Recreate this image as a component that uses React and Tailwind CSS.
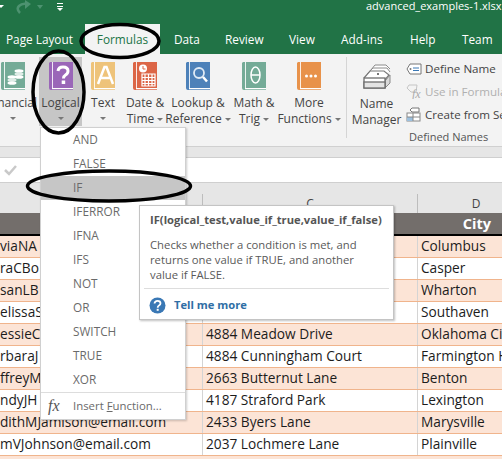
import React from 'react';

const TABS = [
  { label: 'Page Layout', width: 'w-[85px]', pad: 'pl-[6px]' },
  { label: 'Formulas', width: 'w-[75px]', active: true },
  { label: 'Data', width: 'w-[65px]', pad: 'pl-[14px]' },
  { label: 'Review', width: 'w-[64px]' },
  { label: 'View', width: 'w-[52px]' },
  { label: 'Add-ins', width: 'w-[69px]' },
  { label: 'Help', width: 'w-[52px]' },
  { label: 'Team', width: 'w-[40px]' },
];

const MENU_ITEMS = ['AND', 'FALSE', 'IF', 'IFERROR', 'IFNA', 'IFS', 'NOT', 'OR', 'SWITCH', 'TRUE', 'XOR'];

const ROWS = [
  ['viaNA', '', 'Columbus'],
  ['raCBo', '', 'Casper'],
  ['sanLB', '', 'Wharton'],
  ['elissaS', '', 'Southaven'],
  ['essieCD', '4884 Meadow Drive', 'Oklahoma City'],
  ['rbaraJ', '4884 Cunningham Court', 'Farmington Hills'],
  ['ffreyM', '2663 Butternut Lane', 'Benton'],
  ['ndyJH', '4187 Straford Park', 'Lexington'],
  ['dithMJamison@email.com', '2433 Byers Lane', 'Marysville'],
  ['mVJohnson@email.com', '2037 Lochmere Lane', 'Plainville'],
];

const Caret = () => <span className="inline-block w-0 h-0 border-x-[3px] border-x-transparent border-t-[3px] border-t-[#777]" />;

const BookIcon = ({ color, children }) => (
  <svg width="24" height="28" viewBox="0 0 24 28" className="block">
    <path d="M1 0H24V26H3V28H2Q0 28 0 26V1Z" fill={color} />
    <rect x="3" y="27" width="21" height="1" fill={color} opacity="0.7" />
    <rect x="3" y="0" width="1" height="27" fill="#fff" opacity="0.85" />
    <rect x="3" y="26" width="21" height="1" fill="#fff" />
    {children}
  </svg>
);

const RibbonButton = ({ width, label, second, caretInline, children, active, extra }) => (
  <div className={`${width} ${extra || ''} h-[69px] shrink-0 flex flex-col items-center pt-[5px] text-[#444] text-[12px] leading-[16px] ${active ? 'bg-[#c6c6c6]' : ''}`}>
    <div className="h-[29px]">{children}</div>
    <div className="mt-[5px] whitespace-nowrap">{label}</div>
    <div className="whitespace-nowrap flex items-center gap-[3px] h-[16px]">
      {second}
      {caretInline && <Caret />}
    </div>
  </div>
);

const Tooltip = () => (
  <div className="absolute left-[139px] top-[205px] w-[255px] h-[115px] bg-white border border-[#c4c4c4] shadow-[1px_1px_2px_rgba(0,0,0,0.25)] flex flex-col">
    <div className="pl-[10px] pt-[6px] text-[11.2px] leading-[16px] font-bold text-[#555] whitespace-nowrap">IF(logical_test,value_if_true,value_if_false)</div>
    <div className="pl-[10px] pt-[9px] text-[11.3px] leading-[15px] text-[#5a5a5a] whitespace-nowrap">
      <div>Checks whether a condition is met, and</div>
      <div>returns one value if TRUE, and another</div>
      <div>value if FALSE.</div>
    </div>
    <div className="mx-[4px] mt-[6px] h-px bg-[#ddd]" />
    <div className="flex items-center pl-[9px] pt-[8px] gap-[8px]">
      <svg width="17" height="17" viewBox="0 0 17 17">
        <circle cx="8.500" cy="8.500" r="8" fill="#3a78b5" />
        <path d="M5.500 6.500Q5.800 3.800 8.500 3.800Q11.500 3.800 11.500 6.300Q11.500 7.700 10 8.500Q8.700 9.200 8.700 10.800" fill="none" stroke="#fff" strokeWidth="1.800" />
        <rect x="7.700" y="11.800" width="2" height="2" fill="#fff" />
      </svg>
      <span className="text-[11.2px] font-bold text-[#2f6ea5]">Tell me more</span>
    </div>
  </div>
);

const LogicalMenu = () => (
  <div className="absolute left-[40px] top-[127px] w-[146px] h-[293px] bg-white border border-[#d0d0d0] shadow-[1px_1px_2px_rgba(0,0,0,0.2)] flex flex-col">
    {MENU_ITEMS.map((item) => (
      <div key={item} className={`h-[24px] shrink-0 pl-[32px] flex items-center text-[11.8px] text-[#6a6a6a] ${item === 'IF' ? 'bg-[#c6c6c6]' : ''}`}>{item}</div>
    ))}
    <div className="h-px bg-[#ddd]" />
    <div className="flex items-center h-[26px]">
      <span className="w-[32px] pl-[7px] text-[16px] italic text-[#555] font-['Liberation_Serif',serif]">fx</span>
      <span className="text-[11.4px] text-[#6a6a6a] whitespace-nowrap">Insert <u>F</u>unction...</span>
    </div>
  </div>
);

export default function App() {
  return (
    <div className="relative w-[502px] h-[459px] overflow-hidden bg-white flex flex-col font-['Open_Sans','Noto_Sans',sans-serif]">
      {/* title bar */}
      <div className="h-[24px] bg-[#217346] flex items-start relative shrink-0">
        <span className="mt-[5px] w-0 h-0 border-x-[3px] border-x-transparent border-t-[3px] border-t-white -ml-[2px]" />
        <svg width="18" height="14" viewBox="0 0 18 14" className="ml-[11px]">
          <path d="M5 13Q1 9 4 6Q7 3 12 4" fill="none" stroke="#4d9270" strokeWidth="2.500" />
          <path d="M10 0L16 4L10 9Z" fill="#4d9270" />
        </svg>
        <span className="mt-[5px] ml-[4px] w-0 h-0 border-x-[3px] border-x-transparent border-t-[4px] border-t-[#4d9270]" />
        <svg width="8" height="8" viewBox="0 0 8 8" className="ml-[13px] mt-[3px]">
          <path d="M1 0.500H7M1 3.500H7" stroke="#fff" />
          <path d="M1 5H7L4 8Z" fill="#fff" />
        </svg>
        <span className="absolute left-[366px] -top-[1px] text-[11px] leading-[14px] text-white whitespace-nowrap">advanced_examples-1.xlsx</span>
      </div>

      {/* tabs */}
      <div className="h-[30px] bg-[#217346] flex shrink-0 text-[11.8px] text-white">
        {TABS.map((tab) => (
          <div key={tab.label} className={`${tab.width} ${tab.pad || ''} shrink-0 flex items-center whitespace-nowrap pt-[1px] ${tab.active ? 'bg-[#f3f3f3] text-[#217346] justify-center' : ''}`}>{tab.label}</div>
        ))}
      </div>

      {/* ribbon */}
      <div className="h-[93px] bg-[#f3f3f3] border-b border-[#d0d0d0] flex shrink-0 overflow-hidden pt-[3px]">
        <RibbonButton width="w-[53px]" extra="-ml-[14px]" label="Financial" caretInline>
          <BookIcon color="#74ab97">
            <ellipse cx="18" cy="9" rx="4.500" ry="1.800" fill="#fff" />
            <ellipse cx="18" cy="12" rx="4.500" ry="1.800" fill="#dfece7" />
            <ellipse cx="18" cy="15" rx="4.500" ry="1.800" fill="#fff" />
            <ellipse cx="11" cy="15" rx="4.500" ry="1.800" fill="#fff" />
            <ellipse cx="11" cy="18" rx="4.500" ry="1.800" fill="#dfece7" />
            <ellipse cx="11" cy="21" rx="4.500" ry="1.800" fill="#fff" />
          </BookIcon>
        </RibbonButton>
        <RibbonButton width="w-[43px]" label="Logical" caretInline active>
          <BookIcon color="#9a66b8">
            <path d="M9 9Q9.500 5 14 5Q19 5 19 9Q19 11.500 16.500 13Q14.500 14.200 14.500 16.500" fill="none" stroke="#fff" strokeWidth="3" />
            <rect x="12.700" y="18.500" width="3.500" height="3.500" fill="#fff" />
          </BookIcon>
        </RibbonButton>
        <RibbonButton width="w-[42px]" label="Text" caretInline>
          <BookIcon color="#eec37a">
            <path d="M7 22L13.500 5H15.500L22 22M9.500 16H19.500" fill="none" stroke="#fff" strokeWidth="2.500" />
          </BookIcon>
        </RibbonButton>
        <RibbonButton width="w-[42px]" label="Date &" second="Time" caretInline>
          <BookIcon color="#dc6546">
            <circle cx="10" cy="6.500" r="4" fill="#fff" />
            <path d="M10 4V7H12.500" stroke="#dc6546" strokeWidth="1" fill="none" />
            <path d="M9 12H22V24H9ZM9 15.500H22M9 18.500H22M9 21.500H22M12 12V24M15.500 12V24M19 12V24" fill="none" stroke="#fff" strokeWidth="1.200" />
          </BookIcon>
        </RibbonButton>
        <RibbonButton width="w-[64px]" label="Lookup &" second="Reference" caretInline>
          <BookIcon color="#4d81b9">
            <circle cx="13" cy="11" r="5" fill="none" stroke="#dfeaf5" strokeWidth="1.800" />
            <path d="M17 15L21 19.500" stroke="#fff" strokeWidth="2.500" />
          </BookIcon>
        </RibbonButton>
        <RibbonButton width="w-[48px]" label="Math &" second="Trig" caretInline>
          <BookIcon color="#74ab97">
            <ellipse cx="13.500" cy="13" rx="4.500" ry="8" fill="none" stroke="#fff" strokeWidth="1.500" />
            <path d="M9 13H18" stroke="#fff" strokeWidth="1.500" />
          </BookIcon>
        </RibbonButton>
        <RibbonButton width="w-[62px]" label="More" second="Functions" caretInline>
          <BookIcon color="#e8924a">
            <circle cx="9.500" cy="14" r="1.500" fill="#fff" />
            <circle cx="14" cy="14" r="1.500" fill="#fff" />
            <circle cx="18.500" cy="14" r="1.500" fill="#fff" />
          </BookIcon>
        </RibbonButton>
        <div className="w-px h-[81px] bg-[#d5d5d5] ml-[6px] shrink-0" />
        <RibbonButton width="w-[59px]" label="Name" second="Manager">
          <svg width="28" height="29" viewBox="0 0 28 29" className="block">
            <path d="M7 9L12 3H23L27 7" fill="#fff" stroke="#8a8a8a" />
            <path d="M4 12L10 6H24L27 10" fill="#fff" stroke="#8a8a8a" />
            <path d="M1 16L7 9H21L26 13L21 19" fill="#fff" stroke="#777" strokeWidth="1.200" />
            <path d="M22 19L27 13V21L22 26Z" fill="#d9d9d9" stroke="#8a8a8a" />
            <rect x="1" y="16" width="21" height="10" fill="#fff" stroke="#6e6e6e" strokeWidth="1.300" />
            <rect x="1" y="20" width="21" height="6" fill="#e4e4e4" stroke="#6e6e6e" strokeWidth="1.300" />
            <rect x="14" y="11" width="2" height="2" fill="#777" />
          </svg>
        </RibbonButton>
        <div className="flex flex-col text-[11.6px] leading-[23px] text-[#444] whitespace-nowrap">
          <div className="flex items-center gap-[3px]">
            <svg width="16" height="12" viewBox="0 0 16 12">
              <path d="M4 1H15V11H4L1 6Z" fill="#fff" stroke="#777" />
              <path d="M7 5H13M7 7.500H13" stroke="#3a78b5" />
              <circle cx="4.500" cy="6" r="1" fill="#777" />
            </svg>
            Define Name
          </div>
          <div className="flex items-center gap-[3px] text-[#b0b0b0]">
            <svg width="16" height="15" viewBox="0 0 16 15">
              <path d="M3 1H11L10 8H5L1 4Z" fill="none" stroke="#c5c5c5" />
              <text x="6" y="14" fontSize="12" fontStyle="italic" fill="#aaa" fontFamily="Liberation Serif, serif">fx</text>
            </svg>
            Use in Formula
          </div>
          <div className="flex items-center gap-[3px]">
            <svg width="16" height="15" viewBox="0 0 16 15">
              <rect x="1" y="6" width="13" height="8" fill="#fff" stroke="#888" />
              <rect x="1" y="10" width="6" height="4" fill="#9cc0de" />
              <path d="M1 10H14M7 6V14" stroke="#888" />
              <path d="M6 1H13V5H6L4 3Z" fill="#fff" stroke="#777" />
            </svg>
            Create from Selection
          </div>
          <div className="text-[11px] leading-[15px] pl-[3px] text-[#555] mt-[3px]">Defined Names</div>
        </div>
      </div>

      {/* strip under the ribbon */}
      <div className="h-[11px] bg-[#e6e6e6] border-b border-[#cfcfcf] shrink-0" />

      {/* formula bar */}
      <div className="h-[25px] bg-white border-b border-[#cfcfcf] shrink-0 flex items-center pl-[4px]">
        <svg width="13" height="12" viewBox="0 0 13 12">
          <path d="M1 6L5 10L12 2" fill="none" stroke="#c9c9c9" strokeWidth="2.500" />
        </svg>
      </div>

      {/* column headers */}
      <div className="h-[30px] bg-[#e6e6e6] flex items-end shrink-0 text-[12px] text-[#444] leading-[19px]">
        <div className="w-[203px] shrink-0 h-[19px] border-r border-[#bdbdbd]" />
        <div className="w-[215px] shrink-0 h-[19px] border-r border-[#bdbdbd] text-center">C</div>
        <div className="flex-1 h-[19px] text-center pl-[32px]">D</div>
      </div>

      {/* table */}
      <div className="h-[23px] bg-[#736e6b] border-b-2 border-black flex shrink-0 text-[14.5px] font-bold text-white items-center justify-end pr-[11px]">City</div>
      {ROWS.map((row, i) => (
        <div key={row[0]} className={`h-[22px] shrink-0 flex border-b border-[#f0b48c] text-[13.7px] leading-[20px] text-[#1c1c1c] whitespace-nowrap ${i % 2 === 0 ? 'bg-[#fce4d6]' : 'bg-white'}`}>
          <div className="w-[203px] shrink-0 border-r border-[#d4d4d4]">{row[0]}</div>
          <div className="w-[215px] shrink-0 pl-[3px] border-r border-[#d4d4d4]">{row[1]}</div>
          <div className="flex-1 pl-[3px] overflow-hidden">{row[2]}</div>
        </div>
      ))}
      <div className="flex-1 bg-[#fce4d6]" />

      <LogicalMenu />
      <Tooltip />

      {/* hand-drawn annotations */}
      <svg className="absolute left-0 top-0 pointer-events-none" width="502" height="459" viewBox="0 0 502 459" fill="none" stroke="#000" strokeWidth="3.500">
        <ellipse cx="120" cy="41" rx="39" ry="16.500" />
        <ellipse cx="58.500" cy="92" rx="25.500" ry="41" />
        <ellipse cx="109" cy="186" rx="81.500" ry="15" />
      </svg>
    </div>
  );
}
